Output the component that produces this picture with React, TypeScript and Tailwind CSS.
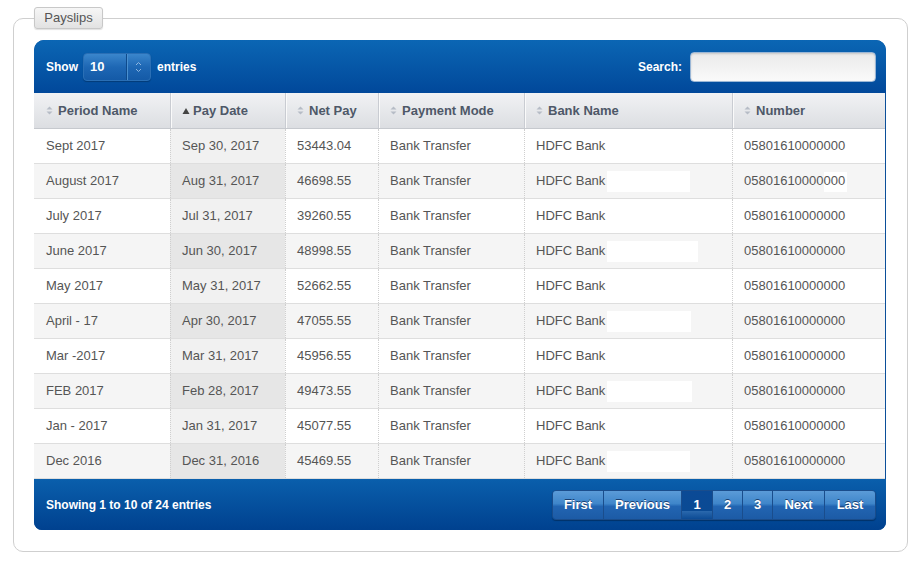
import React from "react";

const rows = [
  ["Sept 2017", "Sep 30, 2017", "53443.04"],
  ["August 2017", "Aug 31, 2017", "46698.55"],
  ["July 2017", "Jul 31, 2017", "39260.55"],
  ["June 2017", "Jun 30, 2017", "48998.55"],
  ["May 2017", "May 31, 2017", "52662.55"],
  ["April - 17", "Apr 30, 2017", "47055.55"],
  ["Mar -2017", "Mar 31, 2017", "45956.55"],
  ["FEB 2017", "Feb 28, 2017", "49473.55"],
  ["Jan - 2017", "Jan 31, 2017", "45077.55"],
  ["Dec 2016", "Dec 31, 2016", "45469.55"],
];

const patchW = [83, 83, 83, 91, 83, 84, 83, 85, 83, 83];

const cols = "grid grid-cols-[136px_115px_93px_146px_208px_153px]";

function SortIcon() {
  return (
    <svg width="7" height="9" viewBox="0 0 7 9" className="shrink-0">
      <path d="M3.5 0.5 L6.5 3.5 L0.5 3.5 Z" fill="#b6bcc6" />
      <path d="M3.5 8.5 L6.5 5.5 L0.5 5.5 Z" fill="#b6bcc6" />
    </svg>
  );
}

function SortUp() {
  return (
    <svg width="8" height="8" viewBox="0 0 8 8" className="shrink-0">
      <path d="M4 1 L7.5 7 L0.5 7 Z" fill="#444" />
    </svg>
  );
}

function Head({ label, sorted, first }: { label: string; sorted?: boolean; first?: boolean }) {
  return (
    <div
      className={
        "flex items-center h-full text-[13px] font-bold text-[#4e5868] " +
        (sorted ? "gap-[3px] " : "gap-[5px] ") +
        (first ? "pl-[12px]" : "pl-[11px] border-l border-[#c9ccd2] shadow-[inset_1px_0_0_#fafafa]")
      }
    >
      {sorted ? <SortUp /> : <SortIcon />}
      <span>{label}</span>
    </div>
  );
}

const pageBtn =
  "h-full flex items-center justify-center text-[13px] font-bold text-white border-r border-[#1a4d8c] bg-[linear-gradient(to_bottom,#5b9bd8_0%,#3f86ca_45%,#2265b2_55%,#1c5ba6_100%)] [text-shadow:0_-1px_0_#1a3f70]";

export default function App() {
  return (
    <div className="w-[915px] h-[561px] bg-white pt-[18px] pl-[13px] font-['Liberation_Sans',Arial,sans-serif]">
      <div className="relative w-[895px] h-[534px] border border-[#cfcfcf] rounded-[10px] pl-[20px] pt-[21px]">
        <div className="absolute left-[20px] top-[-12px] w-[69px] h-[22px] rounded-[3px] border border-[#c8c8c8] bg-[linear-gradient(to_bottom,#f6f6f6,#e2e2e2)] shadow-[0_1px_1px_rgba(0,0,0,0.12)] flex items-center justify-center text-[13px] text-[#555]">
          Payslips
        </div>

        <div className="w-[852px] h-[490px] rounded-t-[10px] rounded-b-[8px] bg-[#0b4f9a] overflow-hidden flex flex-col">
          {/* toolbar */}
          <div className="h-[53px] flex items-center pl-[12px] pr-[10px] bg-[linear-gradient(to_bottom,#0b66b4,#01489a)] text-white text-[12px] font-bold">
            <span>Show</span>
            <div className="ml-[5px] w-[68px] h-[28px] rounded-[4px] flex border border-[#2a6fb5] bg-[linear-gradient(to_bottom,#3a86cc,#1e67b4_50%,#145aa7)] shadow-[0_1px_1px_rgba(0,0,0,0.25)]">
              <div className="w-[42px] flex items-center pl-[6px] text-[13px]">10</div>
              <div className="flex-1 border-l border-[#0e4a8c] shadow-[inset_1px_0_0_#4a90d0] flex items-center justify-center">
                <svg width="7" height="12" viewBox="0 0 7 12">
                  <path d="M1 4 L3.5 1.5 L6 4" stroke="#8fb6df" strokeWidth="1" fill="none" />
                  <path d="M1 8 L3.5 10.5 L6 8" stroke="#8fb6df" strokeWidth="1" fill="none" />
                </svg>
              </div>
            </div>
            <span className="ml-[6px]">entries</span>
            <span className="ml-auto">Search:</span>
            <div className="ml-[8px] w-[186px] h-[30px] rounded-[4px] border border-[#9bb7d6] bg-[linear-gradient(to_bottom,#eaeaea,#fafafa)] shadow-[inset_0_1px_2px_rgba(0,0,0,0.15)]" />
          </div>

          {/* table */}
          <div className="w-[851px] bg-white">
            <div className={cols + " h-[36px] bg-[linear-gradient(to_bottom,#f1f2f4,#dcdee2)] border-b border-[#c6c9ce]"}>
              <Head label="Period Name" first />
              <Head label="Pay Date" sorted />
              <Head label="Net Pay" />
              <Head label="Payment Mode" />
              <Head label="Bank Name" />
              <Head label="Number" />
            </div>
            {rows.map((r, i) => {
              const even = i % 2 === 1;
              const bg = even ? "bg-[#f5f5f5]" : "bg-white";
              const sbg = even ? "bg-[#e6e6e6]" : "bg-[#f1f1f1]";
              const cell = "flex items-center pl-[11px] h-full text-[13px] text-[#555] border-l border-dotted border-[#cfcfcf]";
              return (
                <div key={i} className={cols + " h-[35px] border-b border-[#dedede] " + bg}>
                  <div className="flex items-center pl-[12px] h-full text-[13px] text-[#555]">{r[0]}</div>
                  <div className={cell + " " + sbg}>{r[1]}</div>
                  <div className={cell}>{r[2]}</div>
                  <div className={cell}>Bank Transfer</div>
                  <div className={cell}>
                    <span>HDFC Bank</span>
                    <span className="ml-[2px] h-[21px] bg-white" style={{ width: patchW[i] }} />
                  </div>
                  <div className={cell + " overflow-hidden"}>
                    <span className="relative whitespace-nowrap">
                      {i === 1 && <span className="absolute right-[-2px] top-[1px] w-[23px] h-[20px] bg-white" />}
                      <span className="relative">05801610000000</span>
                    </span>
                  </div>
                </div>
              );
            })}
          </div>

          {/* footer */}
          <div className="flex-1 flex items-center pl-[12px] pr-[10px] bg-[linear-gradient(to_bottom,#0a5fac,#00418f)] text-white text-[12px] font-bold">
            <span>Showing 1 to 10 of 24 entries</span>
            <div className="ml-auto h-[30px] flex rounded-[4px] overflow-hidden border border-[#1a4d8c] shadow-[0_1px_1px_rgba(0,0,0,0.3)]">
              <div className={pageBtn + " w-[51px]"}>First</div>
              <div className={pageBtn + " w-[78px]"}>Previous</div>
              <div className="h-full w-[31px] flex items-center justify-center text-[13px] font-bold text-white border-r border-[#1a4d8c] bg-[linear-gradient(to_bottom,#0b4a96,#0a4a94_70%,#2a68ad_72%,#0c4b95)]">1</div>
              <div className={pageBtn + " w-[30px]"}>2</div>
              <div className={pageBtn + " w-[30px]"}>3</div>
              <div className={pageBtn + " w-[52px]"}>Next</div>
              <div className={pageBtn + " w-[50px] border-r-0"}>Last</div>
            </div>
          </div>
        </div>
      </div>
    </div>
  );
}
